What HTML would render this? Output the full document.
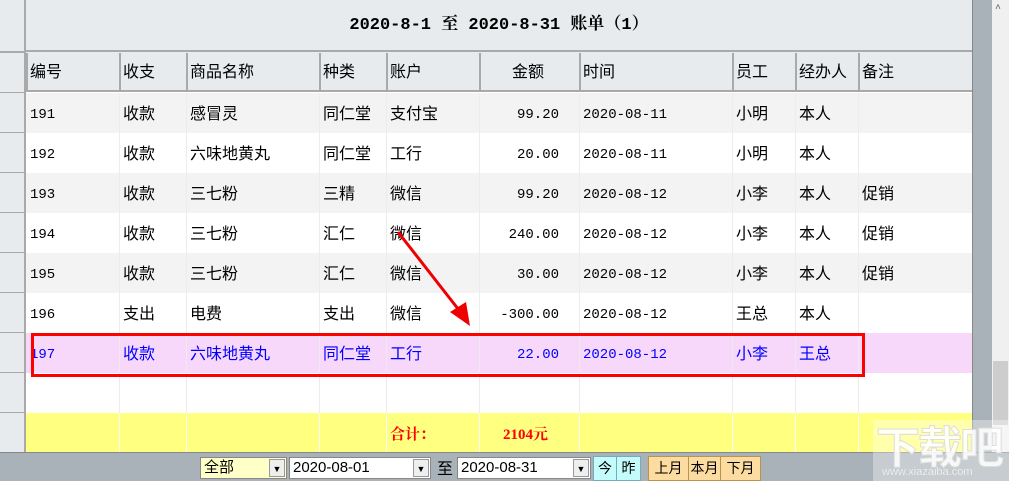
<!DOCTYPE html>
<html><head><meta charset="utf-8"><style>
*{margin:0;padding:0;box-sizing:border-box}
body{width:1009px;height:481px;overflow:hidden;background:#fff;position:relative;font-family:"Liberation Mono","Noto Sans CJK SC",monospace;font-size:15px;color:#000}
.a{position:absolute}
.c{position:absolute;white-space:nowrap;line-height:40px}
.vl{position:absolute;width:1px;background:#ececec}
</style></head><body>
<div class="a" style="left:0;top:0;width:26px;height:452px;background:#e7ebee;border-right:2px solid #a9a9a9"></div>
<div class="a" style="left:0;top:51px;width:26px;height:2px;background:#a9a9a9"></div>
<div class="a" style="left:0;top:92px;width:26px;height:1px;background:#a9a9a9"></div>
<div class="a" style="left:26px;top:0;width:946px;height:52px;background:#e7ebee;border-bottom:2px solid #a9a9a9"></div>
<div class="a" style="left:26px;top:0;width:946px;height:52px;line-height:52px;text-align:center;font-family:'Liberation Mono','Noto Serif CJK SC',monospace;font-weight:bold;font-size:17px">2020-8-1 至 2020-8-31 账单（1）</div>
<div class="a" style="left:26px;top:52px;width:946px;height:40px;background:#e7ebee;border-bottom:2px solid #a9a9a9"></div>
<div id="rows"></div>
<div class="a" style="left:972px;top:0;width:20px;height:452px;background:#a9b1b9;border-left:1px solid #888"></div>
<div class="a" style="left:992px;top:0;width:17px;height:452px;background:#f0f0f0"></div>
<div class="a" style="left:993px;top:361px;width:15px;height:64px;background:#cdcdcd"></div>
<div class="a" style="left:995px;top:4px;font-size:10px;color:#555">^</div>
<div class="a" style="left:0;top:452px;width:1009px;height:29px;background:#a9b1b9;border-top:1px solid #888"></div>
<div class="a" style="left:200px;top:457px;width:87px;height:22px;background:#ffffc8;border:1px solid #888;font-size:15px;line-height:20px;padding-left:3px;font-family:'Liberation Sans','Noto Sans CJK SC',sans-serif">全部<span style="position:absolute;right:1px;top:1px;width:16px;height:18px;background:#eee;border:1px solid #999;font-size:9px;text-align:center;line-height:18px">▼</span></div>
<div class="a" style="left:289px;top:457px;width:142px;height:22px;background:#fff;border:1px solid #888;font-size:15px;line-height:20px;padding-left:3px;font-family:'Liberation Sans',sans-serif">2020-08-01<span style="position:absolute;right:1px;top:1px;width:16px;height:18px;background:#eee;border:1px solid #999;font-size:9px;text-align:center;line-height:18px">▼</span></div>
<div class="a" style="left:437px;top:457px;font-size:16px;line-height:20px;font-family:'Noto Sans CJK SC',sans-serif">至</div>
<div class="a" style="left:457px;top:457px;width:134px;height:22px;background:#fff;border:1px solid #888;font-size:15px;line-height:20px;padding-left:3px;font-family:'Liberation Sans',sans-serif">2020-08-31<span style="position:absolute;right:1px;top:1px;width:16px;height:18px;background:#eee;border:1px solid #999;font-size:9px;text-align:center;line-height:18px">▼</span></div>
<div class="a" style="left:593px;top:456px;width:24px;height:25px;background:#c4fcfc;border:1px solid #7ab;text-align:center;line-height:22px;font-size:14px;font-family:'Noto Sans CJK SC',sans-serif">今</div>
<div class="a" style="left:616px;top:456px;width:25px;height:25px;background:#c4fcfc;border:1px solid #7ab;text-align:center;line-height:22px;font-size:14px;font-family:'Noto Sans CJK SC',sans-serif">昨</div>
<div class="a" style="left:648px;top:456px;width:41px;height:25px;background:#fcdca0;border:1px solid #b8944c;text-align:center;line-height:22px;font-size:14px;font-family:'Noto Sans CJK SC',sans-serif">上月</div>
<div class="a" style="left:688px;top:456px;width:33px;height:25px;background:#fcdca0;border:1px solid #b8944c;text-align:center;line-height:22px;font-size:14px;font-family:'Noto Sans CJK SC',sans-serif">本月</div>
<div class="a" style="left:720px;top:456px;width:41px;height:25px;background:#fcdca0;border:1px solid #b8944c;text-align:center;line-height:22px;font-size:14px;font-family:'Noto Sans CJK SC',sans-serif">下月</div>
<div class="a" style="left:31px;top:333px;width:834px;height:44px;border:3px solid #f00"></div>
<svg class="a" style="left:0;top:0" width="1009" height="481"><line x1="398" y1="232" x2="462" y2="314" stroke="#e00" stroke-width="3"/><polygon points="470,326 450,312 466,302" fill="#e00"/></svg>
<div class="a" style="left:873px;top:420px;width:136px;height:61px;background:rgba(255,255,255,0.35)"></div>
<div class="a" style="left:876px;top:420px;font-size:44px;line-height:48px;color:rgba(255,255,255,0.85);font-family:'Noto Sans CJK SC',sans-serif;font-weight:bold;letter-spacing:-2px;-webkit-text-stroke:1px #ddd">下载吧</div>
<div class="a" style="left:882px;top:466px;font-size:11px;color:#fff;-webkit-text-stroke:0.3px #ccc;font-family:'Liberation Sans',sans-serif">www.xiazaiba.com</div>
<script>
var xs=[26,119,186,319,386,479,579,732,795,858,972];
var hdr=["编号","收支","商品名称","种类","账户","金额","时间","员工","经办人","备注"];
var data=[
["191","收款","感冒灵","同仁堂","支付宝","99.20","2020-08-11","小明","本人",""],
["192","收款","六味地黄丸","同仁堂","工行","20.00","2020-08-11","小明","本人",""],
["193","收款","三七粉","三精","微信","99.20","2020-08-12","小李","本人","促销"],
["194","收款","三七粉","汇仁","微信","240.00","2020-08-12","小李","本人","促销"],
["195","收款","三七粉","汇仁","微信","30.00","2020-08-12","小李","本人","促销"],
["196","支出","电费","支出","微信","-300.00","2020-08-12","王总","本人",""],
["197","收款","六味地黄丸","同仁堂","工行","22.00","2020-08-12","小李","王总",""],
["","","","","","","","","",""]];
var h='';
var cjk="'Liberation Sans','Noto Sans CJK SC',sans-serif";
for(var i=0;i<10;i++){
 h+='<div class="vl" style="left:'+xs[i]+'px;top:53px;height:38px;background:#a9a9a9;width:2px"></div>';
 var lx=i==5?xs[i]+33:xs[i]+4;
 h+='<div class="c" style="left:'+lx+'px;top:53px;font-family:'+cjk+';font-size:16px">'+hdr[i]+'</div>';
}
var bgs=["#f3f3f3","#fff","#f3f3f3","#fff","#f3f3f3","#fff","#f8d8fa","#fff","#ffff80"];
for(var r=0;r<9;r++){
 var y=93+r*40;
 h+='<div class="a" style="left:26px;top:'+y+'px;width:946px;height:40px;background:'+bgs[r]+'"></div>';
 h+='<div class="a" style="left:0;top:'+(y+39)+'px;width:26px;height:1px;background:#a9a9a9"></div>';
 for(var i=1;i<10;i++) h+='<div class="vl" style="left:'+xs[i]+'px;top:'+y+'px;height:40px;background:'+(r==8?'#fff':'#ececec')+'"></div>';
 if(r<8){var d=data[r];var col=r==6?'#00f':'#000';
 for(var i=0;i<10;i++){
  if(!d[i])continue;
  var st=(i==0||i==6)?"font-family:'Liberation Mono',monospace;font-size:14px":(i==5?"font-family:'Liberation Mono',monospace;font-size:14px;width:"+(xs[6]-xs[5]-24)+"px;text-align:right":"font-family:"+cjk+";font-size:16px");
  h+='<div class="c" style="left:'+(xs[i]+4)+'px;top:'+(y+2)+'px;color:'+col+';'+st+'">'+d[i]+'</div>';
 }}
}
h+='<div class="c" style="left:390px;top:415px;color:#f00;font-weight:bold;font-size:15px;font-family:\'Liberation Serif\',\'Noto Serif CJK SC\',serif">合计：</div>';
h+='<div class="c" style="left:503px;top:415px;color:#f00;font-weight:bold;font-size:15px;font-family:\'Liberation Serif\',\'Noto Serif CJK SC\',serif">2104元</div>';
document.getElementById('rows').innerHTML=h;
</script>
</body></html>
